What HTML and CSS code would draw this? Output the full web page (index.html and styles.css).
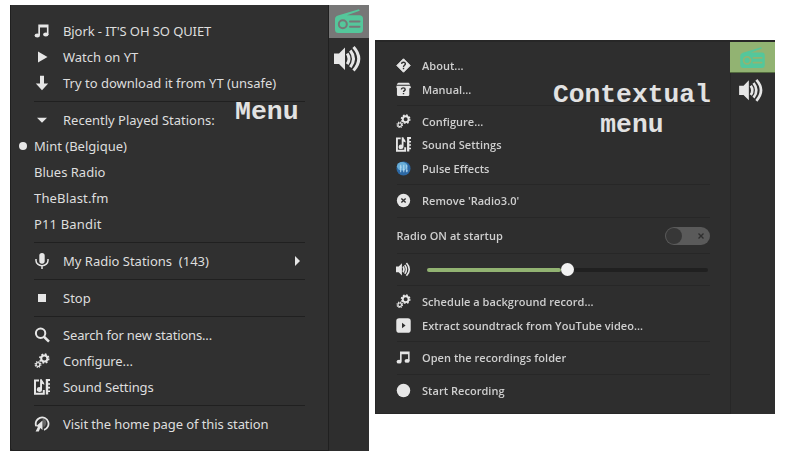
FILE: index.html
```html
<!DOCTYPE html>
<html lang="en">
<head>
<meta charset="utf-8">
<title>Radio applet menus</title>
<link rel="stylesheet" href="styles.css">
</head>
<body>
<svg class="defs" width="0" height="0">
  <symbol id="note" viewBox="0 0 16 16"><path d="M4.300 1.500H14.500v10.200h-1.600V4.400H6V12H4.300z"/><ellipse cx="3.300" cy="12.400" rx="2.700" ry="2"/><ellipse cx="11.800" cy="11.600" rx="2.700" ry="2"/></symbol>
  <symbol id="play" viewBox="0 0 16 16"><path d="M4 2.500v11l9.500-5.500z"/></symbol>
  <symbol id="down" viewBox="0 0 16 16"><path d="M6 .8h4v7.700h4.200L8 15.200 1.800 8.500H6z"/></symbol>
  <symbol id="caret" viewBox="0 0 16 16"><path d="M3 5.700h10L8 10.700z"/></symbol>
  <symbol id="mic" viewBox="0 0 16 16"><rect x="5.300" y="0" width="5.400" height="10.800" rx="2.700"/><path d="M2 6v1.500a6 5.200 0 0 0 12 0V6M8 12.500V16" fill="none" stroke="currentColor" stroke-width="1.500"/></symbol>
  <symbol id="stop" viewBox="0 0 16 16"><path d="M4 4h8v8H4z"/></symbol>
  <symbol id="search" viewBox="0 0 16 16"><g fill="none" stroke="currentColor"><circle cx="6.600" cy="6.300" r="4.700" stroke-width="2"/><path d="M10 9.800l5 4.800" stroke-width="2.600"/></g></symbol>
  <symbol id="gears" viewBox="0 0 16 16"><g fill="none" stroke="currentColor"><circle cx="10.300" cy="5.500" r="3.100" stroke-width="2"/><circle cx="10.300" cy="5.500" r="4.400" stroke-width="1.700" stroke-dasharray="1.800 1.656"/><circle cx="4" cy="11.500" r="1.900" stroke-width="1.300"/><circle cx="4" cy="11.500" r="2.900" stroke-width="1.200" stroke-dasharray="1.300 .978"/></g></symbol>
  <symbol id="sound" viewBox="0 0 16 16"><path d="M5 1.500H1v13.200h8.800V11" fill="none" stroke="currentColor" stroke-width="2"/><path d="M6.100.3h1.800c.2 2 2.500 2.500 2.500 5.500L8 4.800v5.600a2.600 2.400 0 1 1-1.900-2.200zM11.800 0H16v2h-1.800v2.200H16v1.600h-1.800v2H16v1.600h-1.800v2H16V13h-1.800v2.500h-2.400z"/></symbol>
  <symbol id="web" viewBox="0 0 16 16"><path d="M2.200 10.200A6.400 6.400 0 1 1 10 13.900" fill="none" stroke="currentColor" stroke-width="1.800"/><path d="M8.500 4.500v9.500l-2.200-2L4.800 15.500H1.600l2.400-4.800L2 10.200z"/><path d="M8.500 2.500c4.500.5 5 6 1 9z" opacity=".3"/></symbol>
  <symbol id="about" viewBox="0 0 16 16"><path d="M8 .8L15.200 8 8 15.200.8 8z" stroke="currentColor" stroke-linejoin="round"/><path d="M5.900 6.300C6.100 3.800 10.200 4 10 6.300 9.900 7.800 8 7.600 8 9.500M8 10.500v1.400" class="ink"/></symbol>
  <symbol id="manual" viewBox="0 0 16 16"><path d="M2.500.7h11L14.800 2v1H1V2zM.5 4h14.700l.8 2-1.800 1v6.500q0 1.500-1.500 1.500H2.500Q1 15 1 13.500V6.700L.5 6z"/><path d="M5.800 8c0-2.300 4-2.200 4 0 0 1.300-1.800 1.200-1.800 2.700M8 11.800v1.300" class="ink"/></symbol>
  <symbol id="pulse" viewBox="0 0 16 16"><circle cx="8" cy="8" r="7.500" fill="#2c68a4"/><ellipse cx="6.500" cy="5.500" rx="5.500" ry="4.500" fill="#67add8"/><path d="M5 4v8M8.300 4v8M11.500 4v8M4 6.500h2M7.300 9.500h2M10.500 10.500h2" fill="none" stroke="#b8dcf2" stroke-width="1"/></symbol>
  <symbol id="remove" viewBox="0 0 16 16"><circle cx="8" cy="8" r="7.100"/><path d="M5.700 5.800l4.600 4.400m0-4.400l-4.600 4.400" class="ink"/></symbol>
  <symbol id="extract" viewBox="0 0 16 16"><rect x=".3" y=".3" width="15.400" height="15.400" rx="3"/><path d="M6.400 5v6l3.800-3z" fill="#303030"/></symbol>
  <symbol id="record" viewBox="0 0 16 16"><circle cx="8" cy="8" r="7.200"/></symbol>
  <symbol id="speaker" viewBox="0 0 28 26"><path d="M0 7.500h5L11 1.500v22.500L5 18H0z"/><g fill="none" stroke="currentColor" stroke-width="3"><path d="M13.200 7.500q3.600 5.300 0 10.600"/><path d="M16.300 4.500q6.400 8.300 0 16.600"/><path d="M19.500 1q10.500 11.800 0 23.600"/></g></symbol>
  <symbol id="radio" viewBox="0 0 28 24"><path d="M3 6.500L24 .2l.7 1.600L12 6.300h12.500Q28 6.300 28 9.800v10.700Q28 24 24.500 24h-21Q0 24 0 20.500V10q0-2.500 3-3.500z"/><g class="cut"><circle cx="7.800" cy="15.200" r="4"/><path d="M15 12.500H24.500M15 17.800H24.500" stroke-linecap="round"/></g></symbol>
</svg>
<main class="stage">
  <section class="panel panel-main">
    <div class="menu">
      <div class="row"><svg class="icon"><use href="#note"/></svg><span class="snug">Bjork - IT'S OH SO QUIET</span></div>
      <div class="row"><svg class="icon"><use href="#play"/></svg><span>Watch on YT</span></div>
      <div class="row"><svg class="icon"><use href="#down"/></svg><span>Try to download it from YT (unsafe)</span></div>
      <hr>
      <div class="row"><svg class="icon"><use href="#caret"/></svg><span>Recently Played Stations:</span></div>
      <div class="row plain current"><span>Mint (Belgique)</span></div>
      <div class="row plain"><span>Blues Radio</span></div>
      <div class="row plain wide"><span>TheBlast.fm</span></div>
      <div class="row plain wide"><span>P11 Bandit</span></div>
      <hr>
      <div class="row"><svg class="icon"><use href="#mic"/></svg><span>My Radio Stations&nbsp; (143)</span><i class="submenu"></i></div>
      <hr>
      <div class="row"><svg class="icon"><use href="#stop"/></svg><span>Stop</span></div>
      <hr>
      <div class="row"><svg class="icon"><use href="#search"/></svg><span class="tight">Search for new stations...</span></div>
      <div class="row"><svg class="icon"><use href="#gears"/></svg><span class="snug">Configure...</span></div>
      <div class="row"><svg class="icon"><use href="#sound"/></svg><span class="snug">Sound Settings</span></div>
      <hr>
      <div class="row"><svg class="icon"><use href="#web"/></svg><span class="snug">Visit the home page of this station</span></div>
    </div>
    <div class="strip">
      <div class="applet"><svg class="radio"><use href="#radio"/></svg></div>
      <svg class="speaker"><use href="#speaker"/></svg>
    </div>
    <div class="caption">Menu</div>
  </section>
  <section class="panel panel-context">
    <div class="menu">
      <div class="row"><svg class="icon"><use href="#about"/></svg><span>About...</span></div>
      <div class="row"><svg class="icon"><use href="#manual"/></svg><span>Manual...</span></div>
      <hr>
      <div class="row"><svg class="icon"><use href="#gears"/></svg><span>Configure...</span></div>
      <div class="row"><svg class="icon"><use href="#sound"/></svg><span>Sound Settings</span></div>
      <div class="row"><svg class="icon"><use href="#pulse"/></svg><span>Pulse Effects</span></div>
      <hr>
      <div class="row"><svg class="icon"><use href="#remove"/></svg><span>Remove 'Radio3.0'</span></div>
      <hr>
      <div class="row toggle-row"><span>Radio ON at startup</span><div class="toggle"><i></i><svg viewBox="0 0 8 8"><path d="M1.500 1.500l5 5m0-5l-5 5"/></svg></div></div>
      <hr>
      <div class="row volume-row"><svg class="icon"><use href="#speaker"/></svg><div class="slider"><div class="level"></div><div class="knob"></div><div class="rest"></div></div></div>
      <hr>
      <div class="row"><svg class="icon"><use href="#gears"/></svg><span>Schedule a background record...</span></div>
      <div class="row"><svg class="icon"><use href="#extract"/></svg><span>Extract soundtrack from YouTube video...</span></div>
      <hr>
      <div class="row"><svg class="icon"><use href="#note"/></svg><span>Open the recordings folder</span></div>
      <hr>
      <div class="row"><svg class="icon"><use href="#record"/></svg><span>Start Recording</span></div>
    </div>
    <div class="strip">
      <div class="applet"><svg class="radio"><use href="#radio"/></svg></div>
      <svg class="speaker"><use href="#speaker"/></svg>
    </div>
    <div class="caption">Contextual<br>menu</div>
  </section>
</main>
</body>
</html>
```
FILE: styles.css
```css
* { box-sizing: border-box; }

body {
  margin: 0;
  background: #fff;
  font-family: "Noto Sans", "Open Sans", sans-serif;
}

.defs { position: absolute; }

.stage {
  display: flex;
  align-items: flex-start;
  gap: 6px;
  width: 786px;
  height: 458px;
  padding: 5px 0 0 10px;
  overflow: hidden;
}

.panel {
  position: relative;
  display: flex;
  flex: none;
  color: #dedede;
}

.menu { flex: none; }

.row {
  display: flex;
  align-items: center;
  white-space: pre;
}

.icon {
  flex: none;
  fill: currentColor;
  color: #e6e6e6;
}

.ink { fill: none; stroke: #303030; stroke-width: 1.5; }
.cut { fill: none; stroke: var(--applet); stroke-width: 2; }

hr {
  margin: 0;
  border: 0;
}

.strip {
  display: flex;
  flex-direction: column;
  align-items: center;
  flex: 1;
}

.applet {
  display: flex;
  align-self: stretch;
  justify-content: center;
  background: var(--applet);
}

.radio { fill: #54c79b; }
.speaker { fill: currentColor; color: #e6e6e6; }

.caption {
  position: absolute;
  font: bold 26.5px/31px "Liberation Mono", monospace;
  color: #e2e2e2;
  text-align: center;
}

/* Main menu */
.panel-main {
  --applet: #777;
  width: 359px;
  height: 446px;
  background: #2e2e2e;
  font-size: 13px;
}

.panel-main .menu {
  width: 319px;
  padding: 13px 23px 0 23px;
  background: #303030;
  border: solid #202020;
  border-width: 0 1px 1px;
  border-bottom-left-radius: 3px;
}

.panel-main .row { height: 26px; }
.panel-main .icon { width: 16px; height: 16px; margin-right: 13px; }
.panel-main hr { height: 1px; margin: 5px 0; background: #202020; }
.panel-main .snug { letter-spacing: -0.09px; }
.panel-main .tight { letter-spacing: -0.16px; }
.panel-main .wide { letter-spacing: 0.16px; }

.current::before {
  content: "";
  width: 8px;
  height: 8px;
  margin: 0 7px 0 -15px;
  border-radius: 50%;
  background: #e6e6e6;
}

.submenu {
  margin: 0 5px 0 auto;
  border: solid transparent;
  border-width: 5px 0 5px 5px;
  border-left-color: #e6e6e6;
}

.panel-main .applet { height: 33px; padding-top: 4px; }
.panel-main .radio { width: 28px; height: 24px; }
.panel-main .speaker { width: 28px; height: 26px; margin: 8px 2px 0 0; }
.panel-main .caption { left: 225px; top: 92px; }

/* Contextual menu */
.panel-context {
  --applet: #92b372;
  width: 400px;
  height: 374px;
  margin-top: 35px;
  background: #2e2e2e;
  border-top: 2px solid #272727;
  font-family: "Open Sans", "Noto Sans", sans-serif;
  font-size: 11px;
  font-weight: 600;
  letter-spacing: 0.04px;
  color: #cfcfcf;
}

.panel-context .menu {
  width: 356px;
  padding: 12.4px 20.5px 0 20.5px;
  border: solid #272727;
  border-width: 0 1px 1px;
}

.panel-context .row { height: 23.1px; filter: blur(0.3px); }
.panel-context .icon { width: 15px; height: 15px; margin: 0 11.5px 0 -1px; }
.panel-context hr { height: 1px; margin: 4.35px 0; background: #272727; }
.panel-context .toggle-row { height: 27px; }
.panel-context .volume-row { height: 22px; }

.toggle {
  display: flex;
  align-items: center;
  justify-content: space-between;
  width: 45px;
  height: 18px;
  margin-left: auto;
  padding: 0 5px 0 1px;
  border-radius: 9px;
  background: #5a5a5a;
}

.toggle i {
  width: 16px;
  height: 16px;
  border-radius: 50%;
  background: #373737;
}

.toggle svg { width: 8px; height: 8px; fill: none; stroke: #2e2e2e; stroke-width: 1.4; }

.slider {
  display: flex;
  align-items: center;
  flex: 1;
  padding: 0 2px 0 5px;
}

.level { width: 134px; height: 4px; border-radius: 2px; background: #92b372; }
.knob { width: 13px; height: 13px; border-radius: 50%; background: #f2f2f2; }
.rest { flex: 1; height: 4px; border-radius: 2px; background: #202020; }

.panel-context .applet {
  height: 31px;
  margin-left: -1px;
  padding-top: 5px;
  border-bottom: 1px solid #536b3f;
}

.panel-context .radio { width: 25px; height: 21px; }
.panel-context .speaker { width: 25px; height: 23px; margin: 6px 3px 0 0; }
.panel-context .caption { left: 178px; top: 38px; letter-spacing: 0; font-size: 26.3px; line-height: 30px; }
```
